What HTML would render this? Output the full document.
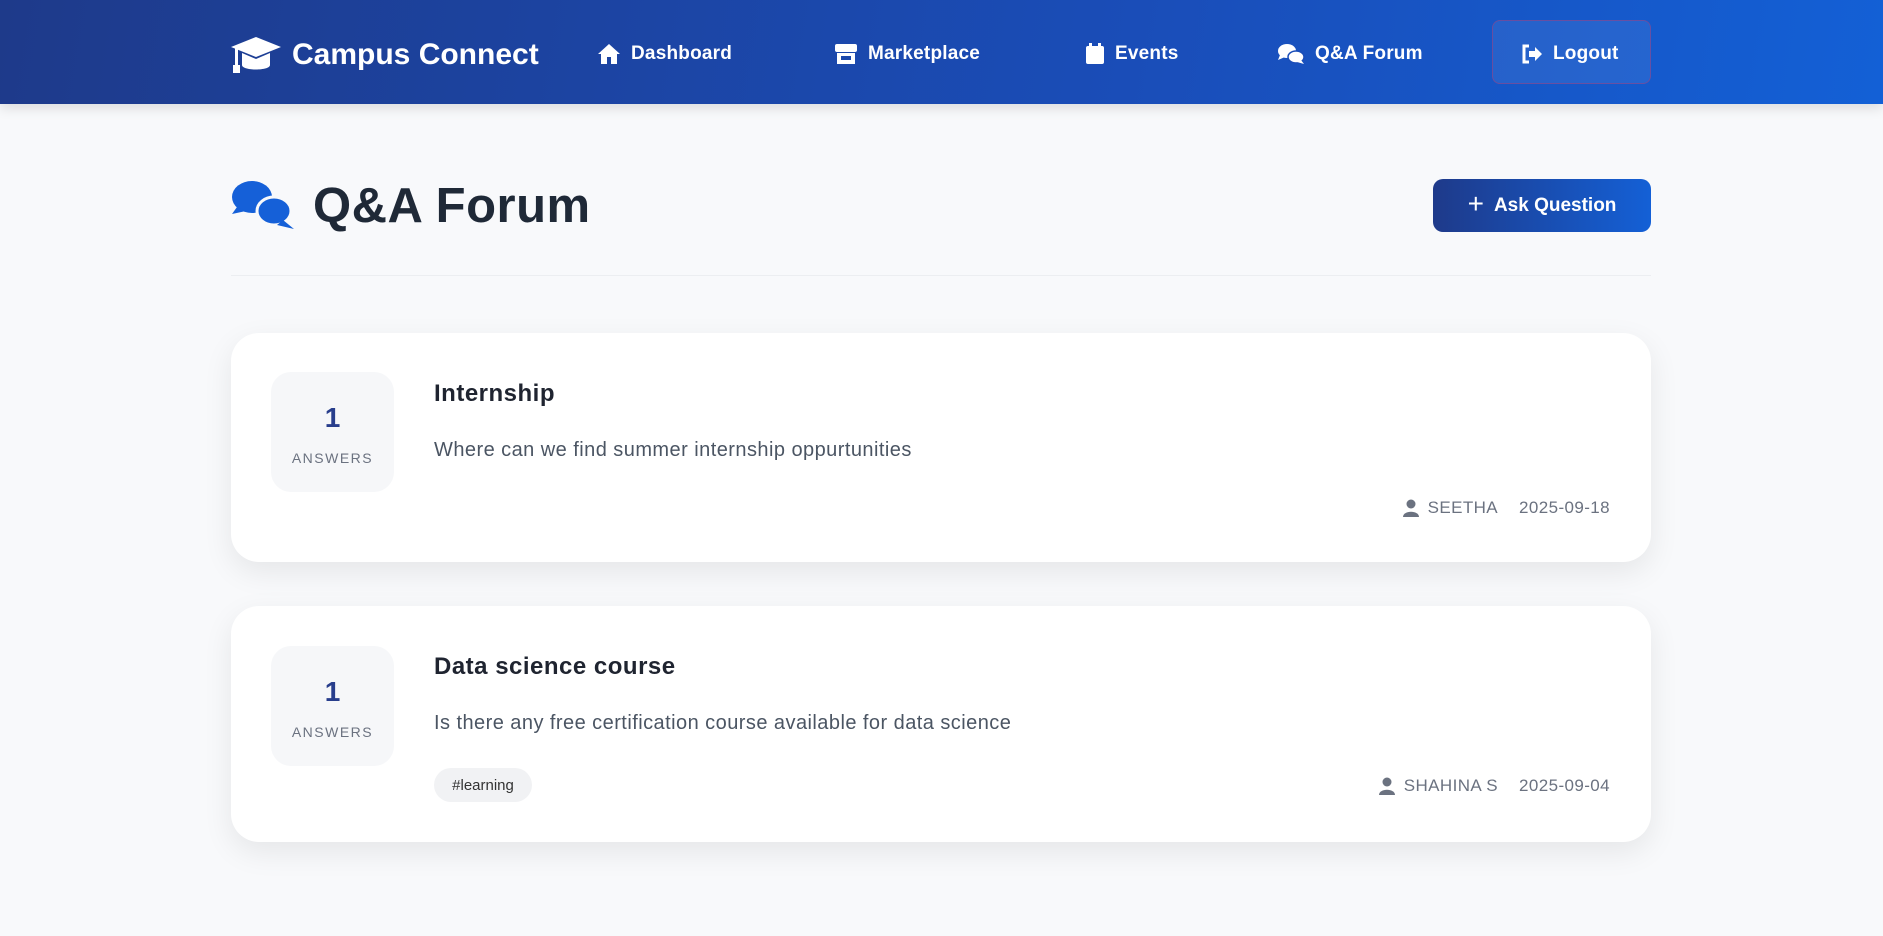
<!DOCTYPE html>
<html><head><meta charset="utf-8"><style>
*{margin:0;padding:0;box-sizing:border-box}
body{width:1883px;height:936px;background:#f8f9fb;font-family:"Liberation Sans",sans-serif;position:relative;overflow:hidden}
.nav{position:absolute;left:0;top:0;width:1883px;height:104px;background:linear-gradient(100deg,#1e3a8a,#1a4db8 60%,#1360d6);box-shadow:0 4px 12px rgba(0,0,0,.12)}
.a{position:absolute;color:#fff;font-weight:700;display:flex;align-items:center;white-space:nowrap}
.ni{font-size:19px;top:41px;height:26px;gap:10px;letter-spacing:.2px}
.card{position:absolute;left:231px;width:1420px;background:#fff;border-radius:28px;box-shadow:0 10px 30px rgba(0,0,0,.08)}
.box{position:absolute;left:40px;width:123px;height:120px;background:#f6f7f9;border-radius:20px;text-align:center}
.box .n{margin-top:30px;font-size:28px;font-weight:700;color:#283e8c}
.box .l{margin-top:16px;font-size:14px;letter-spacing:1.5px;color:#6b7280}
.t{position:absolute;left:203px;font-size:24px;font-weight:700;color:#1f2430;letter-spacing:.5px}
.d{position:absolute;left:203px;font-size:20px;color:#4b5563;letter-spacing:.45px}
.m{position:absolute;right:41px;font-size:17px;color:#6b7280;display:flex;align-items:center;gap:9px;letter-spacing:.4px}
</style></head><body>
<div class="nav">
<div class="a" style="left:230px;top:35px;font-size:30px;gap:10px">
<svg width="52" height="40" viewBox="0 0 52 40"><path d="M26 2 L51 12 L26 22 L1 12 Z" fill="#fff"/><path d="M12 18 V30 C12 36 40 36 40 30 V18 L26 24 Z" fill="#fff"/><rect x="5" y="13" width="3" height="20" fill="#fff"/><rect x="3" y="30" width="7" height="8" fill="#fff"/></svg>Campus Connect</div>
<div class="a ni" style="left:597px"><svg width="24" height="22" viewBox="0 0 24 22"><path d="M12 1 L23 11 H20 V21 H14 V14 H10 V21 H4 V11 H1 Z" fill="#fff"/></svg>Dashboard</div>
<div class="a ni" style="left:834px"><svg width="24" height="22" viewBox="0 0 24 22"><rect x="1" y="1" width="22" height="8" rx="2" fill="#fff"/><path d="M3 10 H21 V21 H3 Z M7 13 V17 H17 V13 Z" fill="#fff" fill-rule="evenodd"/></svg>Marketplace</div>
<div class="a ni" style="left:1085px"><svg width="20" height="22" viewBox="0 0 20 22"><rect x="1" y="3" width="18" height="18" rx="2" fill="#fff"/><rect x="4" y="0" width="3" height="5" fill="#fff"/><rect x="13" y="0" width="3" height="5" fill="#fff"/></svg>Events</div>
<div class="a ni" style="left:1277px"><svg width="28" height="22" viewBox="0 0 28 22"><ellipse cx="10" cy="8" rx="9" ry="7" fill="#fff"/><path d="M3 12 L1 17 L8 14Z" fill="#fff"/><ellipse cx="19" cy="14" rx="8" ry="6" fill="#fff" stroke="#1a4db8" stroke-width="1.5"/><path d="M24 17 L27 21 L20 19Z" fill="#fff"/></svg>Q&amp;A Forum</div>
<div style="position:absolute;left:1492px;top:20px;width:159px;height:64px;border:1px solid rgba(170,60,120,.5);border-radius:8px;background:rgba(255,255,255,.07)"></div>
<div class="a ni" style="left:1521px"><svg width="22" height="20" viewBox="0 0 22 20"><path d="M8 2 H3 V18 H8" stroke="#fff" stroke-width="3" fill="none"/><path d="M8 7 H14 V3 L21 10 L14 17 V13 H8 Z" fill="#fff"/></svg>Logout</div>
</div>
<svg style="position:absolute;left:231px;top:180px" width="64" height="50" viewBox="0 0 64 50"><ellipse cx="21" cy="17" rx="20" ry="16" fill="#1560d8"/><path d="M6 27 L1 34 L15 31Z" fill="#1560d8"/><ellipse cx="43" cy="31" rx="17" ry="14" fill="#1560d8" stroke="#f8f9fb" stroke-width="3"/><path d="M52 40 L63 49 L46 45Z" fill="#1560d8"/></svg>
<div style="position:absolute;left:313px;top:178px;font-size:49px;font-weight:700;color:#1f2937;letter-spacing:.5px">Q&amp;A Forum</div>
<div style="position:absolute;left:1433px;top:179px;width:218px;height:53px;border-radius:10px;background:linear-gradient(90deg,#1e3a8a,#1460d6);color:#fff;font-weight:700;font-size:19px;display:flex;align-items:center;justify-content:center;gap:10px"><span style="font-size:28px;font-weight:400;margin-top:-3px">+</span>Ask Question</div>
<div style="position:absolute;left:231px;top:275px;width:1420px;height:1px;background:#eceef1"></div>

<div class="card" style="top:333px;height:229px">
<div class="box" style="top:39px"><div class="n">1</div><div class="l">ANSWERS</div></div>
<div class="t" style="top:47px">Internship</div>
<div class="d" style="top:106px">Where can we find summer internship oppurtunities</div>
<div class="m" style="top:165px"><svg width="16" height="18" viewBox="0 0 16 18"><circle cx="8" cy="5" r="4.5" fill="#6b7280"/><path d="M0 18 C0 11 16 11 16 18Z" fill="#6b7280"/></svg>SEETHA<span style="margin-left:12px">2025-09-18</span></div>
</div>

<div class="card" style="top:606px;height:236px">
<div class="box" style="top:40px"><div class="n">1</div><div class="l">ANSWERS</div></div>
<div class="t" style="top:47px">Data science course</div>
<div class="d" style="top:106px">Is there any free certification course available for data science</div>
<div style="position:absolute;left:203px;top:162px;width:98px;height:34px;border-radius:17px;background:#f1f2f4;font-size:15px;color:#333;display:flex;align-items:center;justify-content:center">#learning</div>
<div class="m" style="top:170px"><svg width="16" height="18" viewBox="0 0 16 18"><circle cx="8" cy="5" r="4.5" fill="#6b7280"/><path d="M0 18 C0 11 16 11 16 18Z" fill="#6b7280"/></svg>SHAHINA S<span style="margin-left:12px">2025-09-04</span></div>
</div>
</body></html>
